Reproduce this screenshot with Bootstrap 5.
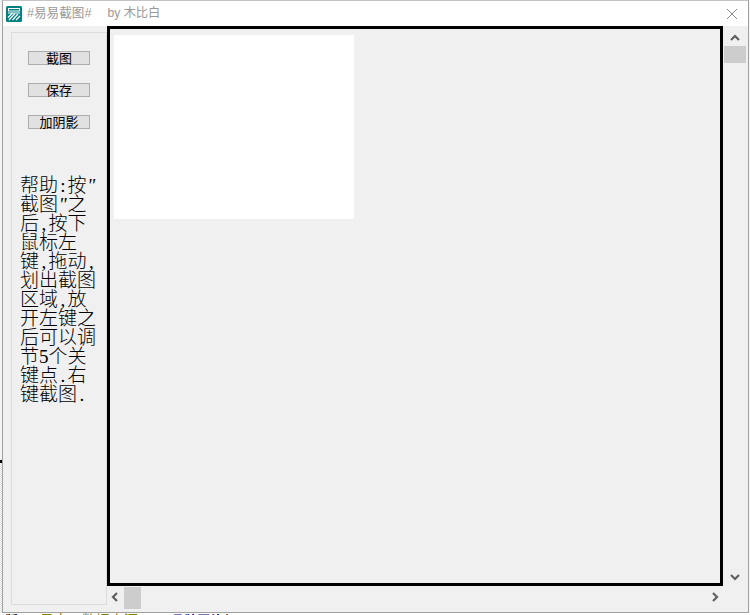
<!DOCTYPE html>
<html lang="zh">
<head>
<meta charset="utf-8">
<title>易易截图</title>
<link href="https://cdn.jsdelivr.net/npm/bootstrap@5.3.0/dist/css/bootstrap.min.css" rel="stylesheet">
<style>
html,body{margin:0;height:615px;overflow:hidden;background:#fff}
.stage{width:750px;height:613px}
.gutter{width:2px;flex:none;background:#f4f4f4}
.gutter-top{height:460px}
.gutter-mark{height:3px;background:#000}
.gutter-rest{flex:1;background:repeating-conic-gradient(#ddd 0 25%,#fff 0 50%) 0 0/2px 2px}
.win{width:747px;height:613px;flex:none;background:#f0f0f0;border:1px solid #a0a0a0;border-top-color:#c4c4c4}
.titlebar{height:25px;background:#fff;font:12.6px "Liberation Sans","Noto Sans CJK SC",sans-serif;color:#999;line-height:25px}
.logo{width:16px;height:16px;margin:0 5px 0 3px;flex:none}
.title-by{margin-left:16px;font-size:12.2px}
.closer{width:10px;height:10px;margin-left:auto;margin-right:11px}
.side{width:96px;height:573px;margin:6px 0 0 8px;flex:none;border:1px solid #dcdcdc;padding:18px 0 0 16px}
.grab{display:block;width:62px;height:14px;padding:0;margin-bottom:18px;border:1px solid #adadad;border-radius:0;background:#e1e1e1;color:#000;font:400 13px/12px "Noto Sans CJK SC",sans-serif;white-space:nowrap;text-align:center}
.helptext{margin:47px 0 0 -8px;width:80px;font:300 19px/19px "Liberation Serif","Noto Sans CJK SC",serif;color:#000;white-space:nowrap}
.hw{display:inline-block;width:9.5px;text-align:center;line-height:19px}
.qt{font-style:italic}
.rightpane{width:640px;flex:none}
.frame{width:616px;height:560px;flex:none;border:3px solid #000;padding:6px 4px}
.shot{width:240px;height:184px;background:#fff}
.vbar{width:23px;height:560px;flex:none}
.vthumb{width:22px;height:17px;background:#cdcdcd;margin-left:1px}
.arrow-down{margin-bottom:5px}
.hbar{height:23px;padding:1px 28px 0 4px}
.hthumb{width:17px;height:22px;background:#cdcdcd;margin-left:5px}
.arrow{display:block;flex:none}
.arrow-h{margin-top:5px}
.strip{height:2px;overflow:hidden;font:bold 13px/14px "Noto Sans CJK SC",sans-serif;white-space:nowrap;padding-left:5px;color:#000}
.strip span{position:relative;top:-1px}
.s-a{margin-right:9px}
.olive{color:#808000;font-weight:400;font-size:14px;margin:0 20px 0 5px}
.navy{color:#000080;margin:0 2px 0 6px}
</style>
</head>
<body>
<div class="stage d-flex">
  <div class="gutter d-flex flex-column">
    <div class="gutter-top"></div>
    <div class="gutter-mark"></div>
    <div class="gutter-rest"></div>
  </div>
  <div class="win d-flex flex-column">
    <div class="titlebar d-flex align-items-center">
      <svg class="logo" viewBox="0 0 16 16">
        <rect x="0" y="0" width="16" height="16" rx="1.5" fill="#008080"/>
        <rect x="2.5" y="2.5" width="11" height="2.5" fill="none" stroke="#fff" stroke-width="1"/>
        <path d="M2 7h12" stroke="#fff" stroke-width="1"/>
        <path d="M2 11.5L6.5 7M3 14L9 7.5M6.5 14L12 8M10 14L14 10" stroke="#fff" stroke-width="1.2" fill="none"/>
      </svg>
      <span>#易易截图#</span>
      <span class="title-by">by 木比白</span>
      <svg class="closer" viewBox="0 0 10 10"><path d="M0 0L10 10M10 0L0 10" stroke="#8a8a8a" stroke-width="1" fill="none"/></svg>
    </div>
    <div class="d-flex flex-grow-1">
      <div class="side">
        <button type="button" class="btn grab">截图</button>
        <button type="button" class="btn grab">保存</button>
        <button type="button" class="btn grab">加阴影</button>
        <div class="helptext">帮助<span class="hw">:</span>按<span class="hw qt">"</span><br>截图<span class="hw qt">"</span>之<br>后<span class="hw">,</span>按下<br>鼠标左<br>键<span class="hw">,</span>拖动<span class="hw">,</span><br>划出截图<br>区域<span class="hw">,</span>放<br>开左键之<br>后可以调<br>节5个关<br>键点<span class="hw">.</span>右<br>键截图<span class="hw">.</span></div>
      </div>
      <div class="rightpane d-flex flex-column">
        <div class="d-flex">
          <div class="frame"><div class="shot"></div></div>
          <div class="vbar d-flex flex-column">
            <svg class="arrow align-self-center mt-2 mb-1" width="10" height="8" viewBox="0 0 10 8"><path d="M1 6L5 2L9 6" stroke="#606060" stroke-width="2.2" fill="none"/></svg>
            <div class="vthumb"></div>
            <svg class="arrow arrow-down align-self-center mt-auto" width="10" height="8" viewBox="0 0 10 8"><path d="M1 2L5 6L9 2" stroke="#606060" stroke-width="2.2" fill="none"/></svg>
          </div>
        </div>
        <div class="hbar d-flex align-items-start">
          <svg class="arrow arrow-h" width="8" height="10" viewBox="0 0 8 10"><path d="M6 1L2 5L6 9" stroke="#606060" stroke-width="2.2" fill="none"/></svg>
          <div class="hthumb"></div>
          <svg class="arrow arrow-h ms-auto" width="8" height="10" viewBox="0 0 8 10"><path d="M2 1L6 5L2 9" stroke="#606060" stroke-width="2.2" fill="none"/></svg>
        </div>
      </div>
    </div>
  </div>
  <div class="gutter"></div>
</div>
<div class="strip"><span class="s-a">版</span><span>^</span><span class="olive">日志·数据来源</span><span>^</span><span class="navy">品牌图片</span><span>)</span></div>
</body>
</html>
